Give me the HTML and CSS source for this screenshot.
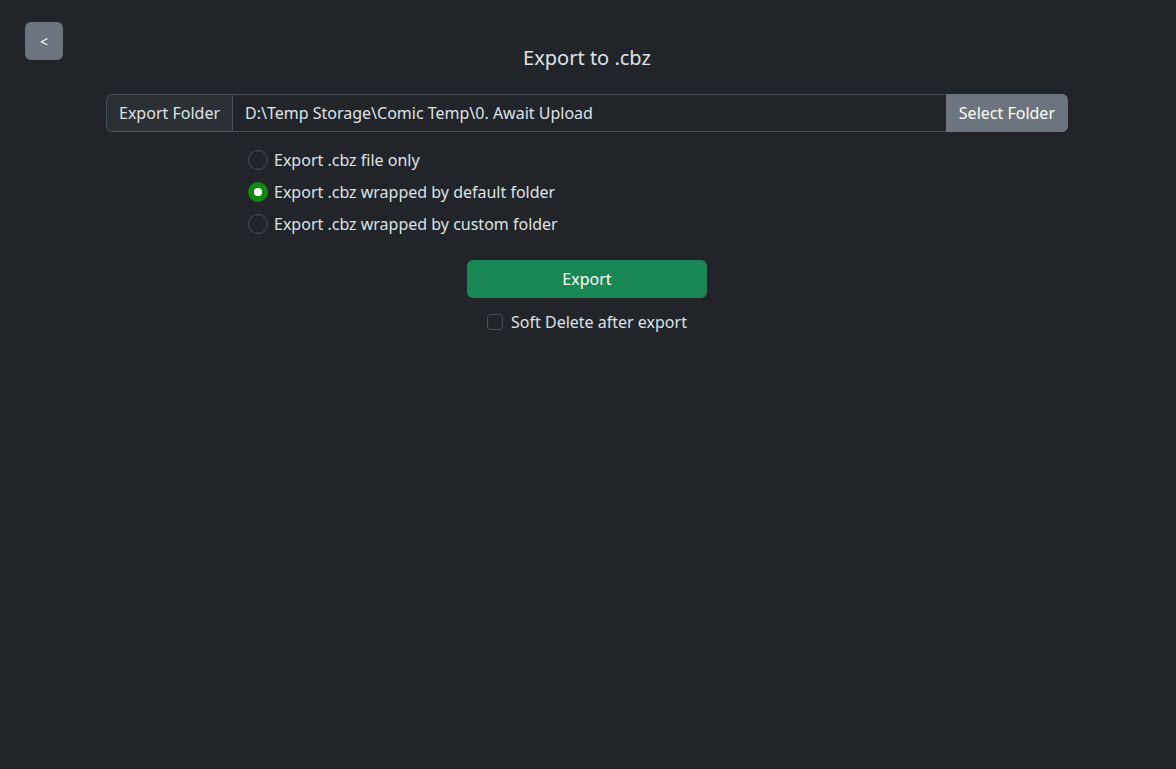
FILE: index.html
```html
<!DOCTYPE html>
<html lang="en">
<head>
    <meta charset="UTF-8" />
    <meta content="width=device-width, initial-scale=1.0" name="viewport" />
    <title>Export to .cbz</title>
    <link rel="stylesheet" href="styles.css">
</head>
<body>

<button class="btn btn-back" id="backBtn">&lt;</button>

<main class="main-content">
    <h1 class="title">Export to .cbz</h1>

    <!-- Folder picker -->
    <div class="input-group">
        <span class="input-group-text">Export Folder</span>
        <input class="form-control" id="exportFolder" type="text" value="D:\Temp Storage\Comic Temp\0. Await Upload" />
        <button class="btn btn-secondary" id="selectFolderBtn">Select Folder</button>
    </div>

    <!-- Export mode -->
    <div class="options">
        <label class="form-check">
            <input class="form-check-input" type="radio" name="exportMode" value="file" />
            <span>Export .cbz file only</span>
        </label>
        <label class="form-check">
            <input class="form-check-input" type="radio" name="exportMode" value="default" checked />
            <span>Export .cbz wrapped by default folder</span>
        </label>
        <label class="form-check">
            <input class="form-check-input" type="radio" name="exportMode" value="custom" />
            <span>Export .cbz wrapped by custom folder</span>
        </label>
    </div>

    <div class="actions">
        <button class="btn btn-success" id="exportBtn">Export</button>
        <label class="form-check check-small">
            <input class="form-check-input checkbox" type="checkbox" id="softDelete" />
            <span>Soft Delete after export</span>
        </label>
    </div>
</main>

</body>
</html>
```

FILE: styles.css
```css
* {
    box-sizing: border-box;
    margin: 0;
    padding: 0;
}

body {
    background: #212529;
    color: #dee2e6;
    font-family: 'Noto Sans', sans-serif;
    font-size: 16px;
    line-height: 1.5;
    min-height: 100vh;
}

.btn {
    font-family: inherit;
    font-size: 16px;
    color: #fff;
    border: 1px solid transparent;
    border-radius: 6px;
    cursor: pointer;
}

.btn-back {
    display: block;
    width: 38px;
    height: 38px;
    margin: 22px 0 0 25px;
    background-color: #6c757d;
    font-size: 14px;
}

.main-content {
    width: 962px;
    margin: -16px 0 0 106px;
}

.title {
    font-size: 20px;
    font-weight: 400;
    text-align: center;
    line-height: 28px;
    margin-bottom: 22px;
}

.input-group {
    display: flex;
    height: 38px;
}

.input-group-text {
    display: flex;
    align-items: center;
    padding: 0 12px;
    background: #2b3035;
    border: 1px solid #495057;
    border-radius: 6px 0 0 6px;
}

.form-control {
    flex: 1;
    min-width: 0;
    padding: 0 12px;
    background: #212529;
    color: #dee2e6;
    font-family: inherit;
    font-size: 16px;
    border: 1px solid #495057;
    border-left: none;
    border-right: none;
    outline: none;
}

.btn-secondary {
    background-color: #6c757d;
    border-radius: 0 6px 6px 0;
    padding: 0 12px;
}

.options {
    display: flex;
    flex-direction: column;
    padding: 12px 0 0 142px;
}

.form-check {
    display: flex;
    align-items: center;
    gap: 6px;
    height: 32px;
}

.form-check-input {
    appearance: none;
    width: 20px;
    height: 20px;
    border: 1px solid #495057;
    border-radius: 50%;
    background: #212529;
    flex-shrink: 0;
}

.form-check-input[type="radio"]:checked {
    border: none;
    background: radial-gradient(circle, #fff 0 4px, #0f8a0f 4.5px);
}

.actions {
    display: flex;
    flex-direction: column;
    align-items: center;
    padding-top: 20px;
}

.btn-success {
    width: 240px;
    height: 38px;
    background-color: #198754;
}

.check-small {
    margin-top: 8px;
    height: 32px;
    gap: 8px;
}

.checkbox {
    width: 16px;
    height: 16px;
    border-radius: 4px;
}
```
